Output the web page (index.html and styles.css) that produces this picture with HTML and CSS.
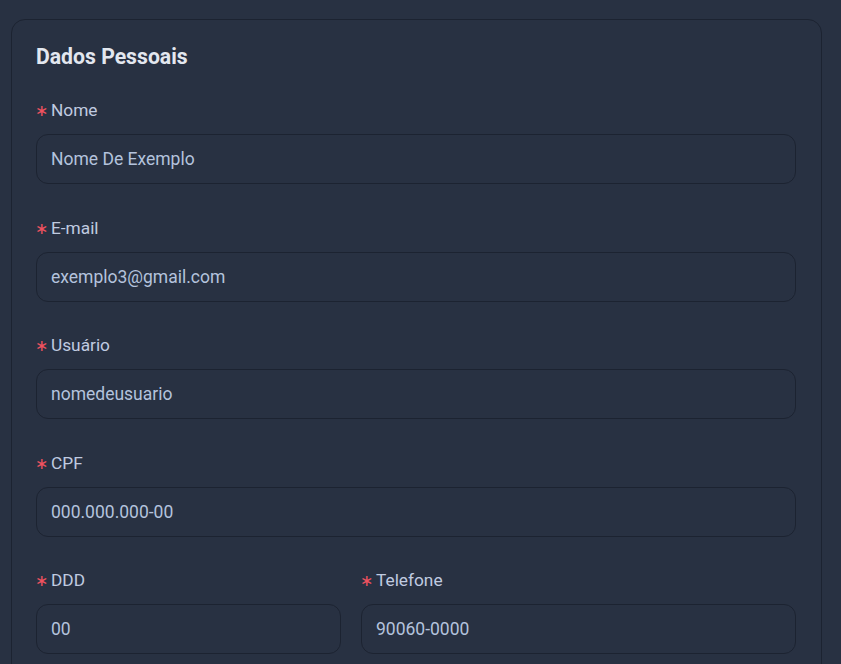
FILE: index.html
```html
<!DOCTYPE html>
<html lang="pt-BR">
<head>
<meta charset="utf-8">
<title>Dados Pessoais</title>
<link rel="stylesheet" href="styles.css">
</head>
<body>
<div class="page">
  <section class="card">
    <h2 class="card-title">Dados Pessoais</h2>
    <div class="field">
      <label class="label"><span class="req">∗</span>Nome</label>
      <div class="input">Nome De Exemplo</div>
    </div>
    <div class="field">
      <label class="label"><span class="req">∗</span>E-mail</label>
      <div class="input">exemplo3@gmail.com</div>
    </div>
    <div class="field">
      <label class="label"><span class="req">∗</span>Usuário</label>
      <div class="input">nomedeusuario</div>
    </div>
    <div class="field">
      <label class="label"><span class="req">∗</span>CPF</label>
      <div class="input">000.000.000-00</div>
    </div>
    <div class="row">
      <div class="field">
        <label class="label"><span class="req">∗</span>DDD</label>
        <div class="input">00</div>
      </div>
      <div class="field">
        <label class="label"><span class="req">∗</span>Telefone</label>
        <div class="input">90060-0000</div>
      </div>
    </div>
  </section>
</div>
</body>
</html>
```

FILE: styles.css
```css
html, body {
  margin: 0;
  padding: 0;
  background: #283142;
  height: 100%;
  overflow: hidden;
}

body {
  font-family: Roboto, "Liberation Sans", sans-serif;
}

.page {
  padding: 19px 19px 0 11px;
}

.card {
  border: 1px solid #1c2331;
  border-radius: 14px;
  padding: 24px 25px 24px 24px;
  background: #283142;
}

.card-title {
  margin: 0 0 28px;
  font-size: 21.2px;
  line-height: 26px;
  font-weight: 700;
  color: #e3e7ef;
}

.field {
  margin-bottom: 31.5px;
}

.label {
  display: flex;
  align-items: center;
  height: 24px;
  margin-bottom: 12px;
  font-size: 17.3px;
  color: #c0cbe0;
}

.req {
  font-family: "DejaVu Sans", sans-serif;
  color: #f0525f;
  font-size: 16px;
  width: 15px;
  margin-left: -1px;
  margin-right: 1px;
  padding-top: 1px;
}

.input {
  box-sizing: border-box;
  height: 50px;
  border: 1px solid #1c2331;
  border-radius: 12px;
  padding: 0 14px;
  display: flex;
  align-items: center;
  font-size: 17.5px;
  color: #b4c3dd;
}

.row {
  display: grid;
  grid-template-columns: 305fr 435fr;
  column-gap: 20px;
}
```
